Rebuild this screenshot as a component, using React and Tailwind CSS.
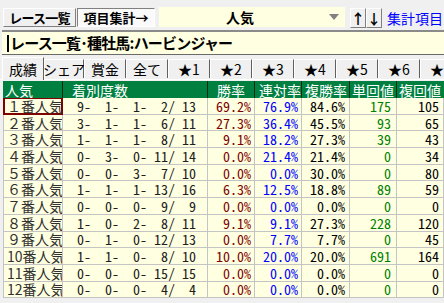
import React from "react";

const cols = "grid grid-cols-[60px_145px_47px_47px_48px_47px_47px]";

// 人気別の成績
const rows = [
  ["１番人気", "9-  1-  1-  2/ 13", "69.2%", "76.9%", "84.6%", "175", "105"],
  ["２番人気", "3-  1-  1-  6/ 11", "27.3%", "36.4%", "45.5%", "93", "65"],
  ["３番人気", "1-  1-  1-  8/ 11", "9.1%", "18.2%", "27.3%", "39", "43"],
  ["４番人気", "0-  3-  0- 11/ 14", "0.0%", "21.4%", "21.4%", "0", "34"],
  ["５番人気", "0-  0-  3-  7/ 10", "0.0%", "0.0%", "30.0%", "0", "80"],
  ["６番人気", "1-  1-  1- 13/ 16", "6.3%", "12.5%", "18.8%", "89", "59"],
  ["７番人気", "0-  0-  0-  9/  9", "0.0%", "0.0%", "0.0%", "0", "0"],
  ["８番人気", "1-  0-  2-  8/ 11", "9.1%", "9.1%", "27.3%", "228", "120"],
  ["９番人気", "0-  1-  0- 12/ 13", "0.0%", "7.7%", "7.7%", "0", "45"],
  ["10番人気", "1-  1-  0-  8/ 10", "10.0%", "20.0%", "20.0%", "691", "164"],
  ["11番人気", "0-  0-  0- 15/ 15", "0.0%", "0.0%", "0.0%", "0", "0"],
  ["12番人気", "0-  0-  0-  4/  4", "0.0%", "0.0%", "0.0%", "0", "0"],
];

const tabs = ["シェア", "賞金", "全て", "★1", "★2", "★3", "★4", "★5", "★6", "★7"];

const mono = "font-['Noto_Sans_Mono_CJK_JP','DejaVu_Sans_Mono',monospace] text-[14px] leading-[14px] whitespace-pre";
const cell = "border-r border-b border-[#c4c4c4] flex items-center justify-end overflow-hidden";
const raised = "bg-[#f0f0f0] border border-t-white border-l-white border-r-[#808080] border-b-[#808080]";

export default function App() {
  return (
    <div className="w-[444px] h-[303px] overflow-hidden bg-[#f0f0f0] font-['Noto_Sans_CJK_JP',sans-serif] text-black">
      {/* ツールバー */}
      <div className="flex items-start h-[30px] pt-[8px] pl-[3px] whitespace-nowrap">
        <div className={`h-[19px] w-[73px] shrink-0 flex items-center justify-center ${raised} text-[13px] leading-[14px] font-bold tracking-[-0.8px]`}>
          レース一覧
        </div>
        <div className="h-[19px] w-[78px] shrink-0 ml-[1px] flex items-center justify-center bg-[#fafafa] border border-t-[#808080] border-l-[#808080] border-r-white border-b-white text-[13px] leading-[14px] font-bold">
          項目集計→
        </div>
        <div className="h-[20px] w-[186px] shrink-0 ml-[4px] -mt-[1px] bg-[#ffffe1] flex items-center">
          <span className="flex-1 text-center text-[14px] leading-[14px] font-bold pr-[8px]">人気</span>
          <span className="w-0 h-0 mr-[6px] border-l-[5px] border-r-[5px] border-t-[6px] border-l-transparent border-r-transparent border-t-[#808080]" />
        </div>
        <div className="flex shrink-0 ml-[5px]">
          <div className={`h-[20px] w-[16px] flex items-center justify-center ${raised} text-[14px] leading-[14px] font-bold`}>↑</div>
          <div className={`h-[20px] w-[16px] flex items-center justify-center ${raised} text-[14px] leading-[14px] font-bold`}>↓</div>
        </div>
        <span className="shrink-0 ml-[5px] text-[14px] leading-[20px] text-[#0000ff]">集計項目メニュー</span>
      </div>

      {/* タイトル */}
      <div className="h-[25px] ml-[2px] bg-[#ffffe1] border-t-2 border-t-[#8a8a8a] border-b border-b-[#6a6a6a] flex items-center pl-[5px]">
        <span className="w-[2px] h-[17px] bg-black mr-[1px] shrink-0" />
        <span className="text-[15px] leading-[16px] font-bold tracking-[-0.8px] whitespace-nowrap">レース一覧･種牡馬:ハービンジャー</span>
      </div>

      {/* タブ */}
      <div className="h-[25px] flex items-end pl-[2px] border-b border-white whitespace-nowrap">
        <div className="h-[23px] w-[42px] shrink-0 -mb-px bg-[#f0f0f0] border-l border-t border-white border-r border-r-[#606060] flex items-center justify-center text-[14px] leading-[14px] z-10">
          成績
        </div>
        {tabs.map((t, i) => (
          <div
            key={t}
            className={`h-[19px] ${i === 0 ? "w-[40px]" : "w-[42px]"} shrink-0 mb-[1px] bg-[#f0f0f0] border-l border-t border-white border-r border-r-[#606060] flex items-center justify-center text-[14px] leading-[14px]`}
          >
            {t}
          </div>
        ))}
      </div>

      {/* 表 */}
      <div className="ml-[3px] mt-[1px] bg-[#ffffe1]">
        <div className={`${cols} h-[17px] bg-[#008040] text-white text-[14px] leading-[14px]`}>
          <div className="border-r border-[#0a2a14] flex items-center pl-[2px]">人気</div>
          <div className="border-r border-[#0a2a14] flex items-center pl-[9px]">着別度数</div>
          <div className="border-r border-[#0a2a14] flex items-center pl-[9px]">勝率</div>
          <div className="border-r border-[#0a2a14] flex items-center pl-[4px]">連対率</div>
          <div className="border-r border-[#0a2a14] flex items-center pl-[3px]">複勝率</div>
          <div className="border-r border-[#0a2a14] flex items-center pl-[2px]">単回値</div>
          <div className="flex items-center pl-[2px]">複回値</div>
        </div>
        {rows.map((r, i) => (
          <div key={r[0]} className={`${cols} h-[16.7px] overflow-hidden`}>
            <div
              className={`border-l border-r border-b flex items-center pl-[3px] text-[14px] leading-[14px] text-[#303030] whitespace-nowrap overflow-hidden ${
                i === 0 ? "shadow-[inset_0_0_0_1px_#800000] border-[#800000]" : "border-[#c4c4c4]"
              }`}
            >
              {r[0]}
            </div>
            <div className={`${cell} ${mono} pr-[11px] text-[#202020]`}>{r[1]}</div>
            <div className={`${cell} ${mono} pr-[3px] text-[#800000]`}>{r[2]}</div>
            <div className={`${cell} ${mono} pr-[3px] text-[#0000ff]`}>{r[3]}</div>
            <div className={`${cell} ${mono} pr-[4px] text-black`}>{r[4]}</div>
            <div className={`${cell} ${mono} pr-[5px] text-[#008000]`}>{r[5]}</div>
            <div className={`${cell} ${mono} pr-[4px] text-black`}>{r[6]}</div>
          </div>
        ))}
      </div>
    </div>
  );
}
